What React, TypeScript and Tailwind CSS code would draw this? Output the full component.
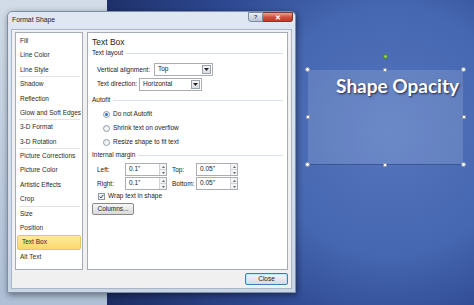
import React from "react";

const ui = "font-['Liberation_Sans',Arial,sans-serif] text-[#1b1b1b]";

const listItems: { label: string; sep?: boolean; active?: boolean }[] = [
  { label: "Fill" },
  { label: "Line Color" },
  { label: "Line Style", sep: true },
  { label: "Shadow" },
  { label: "Reflection" },
  { label: "Glow and Soft Edges", sep: true },
  { label: "3-D Format" },
  { label: "3-D Rotation", sep: true },
  { label: "Picture Corrections" },
  { label: "Picture Color" },
  { label: "Artistic Effects" },
  { label: "Crop", sep: true },
  { label: "Size" },
  { label: "Position" },
  { label: "Text Box", active: true },
  { label: "Alt Text" },
];

function GroupHeader({ label }: { label: string }) {
  return (
    <div className="flex h-[10px] items-center gap-[3px] pr-[4px]">
      <span className="text-[6.5px] leading-none">{label}</span>
      <div className="h-px flex-1 bg-[#d9dfe6]" />
    </div>
  );
}

function Arrow() {
  return (
    <div className="flex h-[9px] w-[9px] items-center justify-center border border-[#9aa3ad] bg-gradient-to-b from-[#f7f7f7] to-[#d9dde2]">
      <svg width="5" height="3" viewBox="0 0 5 3">
        <path d="M0 0h5L2.5 3z" fill="#222" />
      </svg>
    </div>
  );
}

function Dropdown({ value, width }: { value: string; width: string }) {
  return (
    <div className={`flex h-[13px] items-center justify-between border border-[#abadb3] bg-white pl-[3px] pr-[1px] ${width}`}>
      <span className="text-[6.5px] leading-none">{value}</span>
      <Arrow />
    </div>
  );
}

function Spin({ value }: { value: string }) {
  return (
    <div className="flex h-[13px] w-[42px] items-center justify-between border border-[#abadb3] bg-white pl-[3px]">
      <span className="text-[6.5px] leading-none">{value}</span>
      <div className="flex h-full w-[7px] flex-col border-l border-[#d0d4d9] bg-[#f3f4f6]">
        <div className="flex flex-1 items-center justify-center border-b border-[#d0d4d9]">
          <svg width="3" height="2" viewBox="0 0 3 2"><path d="M0 2h3L1.5 0z" fill="#666" /></svg>
        </div>
        <div className="flex flex-1 items-center justify-center">
          <svg width="3" height="2" viewBox="0 0 3 2"><path d="M0 0h3L1.5 2z" fill="#666" /></svg>
        </div>
      </div>
    </div>
  );
}

function Radio({ label, checked }: { label: string; checked?: boolean }) {
  return (
    <div className="flex h-[14px] items-center gap-[3px] pl-[11px]">
      <div className="flex h-[7px] w-[7px] items-center justify-center rounded-full border border-[#8e9aa8] bg-gradient-to-br from-[#e6eaef] to-white">
        {checked && <div className="h-[3px] w-[3px] rounded-full bg-[#2f6fc4]" />}
      </div>
      <span className="text-[6.5px] leading-none">{label}</span>
    </div>
  );
}

function Handle({ className }: { className: string }) {
  return <div className={`absolute h-[5px] w-[5px] rounded-full border border-[#8a96a8] bg-white ${className}`} />;
}

function SqHandle({ className }: { className: string }) {
  return <div className={`absolute h-[4px] w-[4px] border border-[#8a96a8] bg-white ${className}`} />;
}

export default function App() {
  return (
    <div className="relative flex h-[305px] w-[474px] overflow-hidden">
      {/* left app area */}
      <div className="h-full w-[107px] bg-gradient-to-b from-[#d2dce8] to-[#aebfd6]" />
      {/* slide area */}
      <div className="h-full flex-1 bg-[radial-gradient(circle_330px_at_77%_43%,#5677bf_0%,#4566b0_38%,#2e4992_62%,#1b2c62_100%)]" />

      {/* shape on slide */}
      <div className="absolute left-[308px] top-[70px] h-[94px] w-[155px] bg-white/[0.13] shadow-[0_1px_0_rgba(20,40,90,0.35)]">
        <div className="flex h-[31px] items-center justify-end pr-[4px]">
          <span className="font-['Lato',sans-serif] text-[19px] font-bold leading-none text-white [text-shadow:1px_1px_2px_rgba(0,0,20,0.7)]">
            Shape Opacity
          </span>
        </div>
        <Handle className="-left-[3px] -top-[3px]" />
        <Handle className="-right-[3px] -top-[3px]" />
        <Handle className="-left-[3px] -bottom-[3px]" />
        <Handle className="-right-[3px] -bottom-[3px]" />
        <SqHandle className="left-[75px] -top-[2.5px]" />
        <SqHandle className="left-[75px] -bottom-[2.5px]" />
        <SqHandle className="-left-[2.5px] top-[45px]" />
        <SqHandle className="-right-[2.5px] top-[45px]" />
        <div className="absolute left-[75px] -top-[16px] h-[5px] w-[5px] rounded-full border border-[#4a7a2a] bg-[#8fd14f]" />
      </div>

      {/* dialog window */}
      <div className={`absolute left-[7px] top-[11px] flex h-[282px] w-[289px] flex-col rounded-t-[5px] border border-[#7d8fa6] bg-gradient-to-b from-[#dfe8f2] to-[#c9d6e5] shadow-[1px_2px_6px_rgba(0,0,0,0.45)] ${ui}`}>
        {/* title bar */}
        <div className="flex h-[17px] items-start justify-between">
          <span className="pl-[4px] pt-[5px] text-[6.8px] leading-none text-[#1e1e1e]">Format Shape</span>
          <div className="mr-[2px] flex">
            <div className="flex h-[10px] w-[15px] items-center justify-center rounded-bl-[3px] border border-[#7b8aa0] bg-gradient-to-b from-[#e9eef4] to-[#b9c6d5] text-[6px] font-bold leading-none text-[#39475a]">
              ?
            </div>
            <div className="flex h-[10px] w-[30px] items-center justify-center rounded-br-[3px] border border-l-0 border-[#7a3a32] bg-gradient-to-b from-[#e9a294] via-[#d2513d] to-[#c23a25] text-[7px] font-bold leading-none text-white">
              ✕
            </div>
          </div>
        </div>
        {/* client area */}
        <div className="mx-[3px] mb-[3px] flex flex-1 flex-col border border-[#a8b6c8] bg-[#f0f0f0]">
          <div className="flex gap-[4px] pl-[3px] pr-[3px] pt-[2px]">
            {/* list */}
            <div className="flex h-[238px] w-[68px] flex-col border border-[#a5acb5] bg-white pt-[1px]">
              {listItems.map((it) => (
                <div key={it.label} className="relative h-[14.4px]">
                  <div
                    className={`flex h-full items-center px-[4px] ${
                      it.active
                        ? "mx-[1px] rounded-[2px] border border-[#e8c660] bg-gradient-to-b from-[#fdeaa0] to-[#fbd969] px-[3px]"
                        : ""
                    }`}
                  >
                    <span className="whitespace-nowrap text-[6.5px] leading-none text-[#2a2a2a]">{it.label}</span>
                  </div>
                  {it.sep && <div className="absolute bottom-0 left-[3px] right-[2px] h-px bg-[#e2e2e2]" />}
                </div>
              ))}
            </div>
            {/* right panel */}
            <div className="flex h-[238px] flex-1 flex-col border border-[#a5acb5] bg-white pl-[4px]">
              <div className="mt-[3px] flex h-[12px] items-center text-[8.5px] leading-none">Text Box</div>
              <GroupHeader label="Text layout" />
              <div className="mt-[5px] flex h-[14px] items-start pl-[5px]">
                <span className="w-[57px] pt-[3.5px] text-[6.5px] leading-none">Vertical alignment:</span>
                <Dropdown value="Top" width="w-[59px]" />
              </div>
              <div className="flex h-[14px] items-end pl-[5px]">
                <span className="w-[42px] pb-[3.5px] text-[6.5px] leading-none">Text direction:</span>
                <Dropdown value="Horizontal" width="w-[63px]" />
              </div>
              <div className="mt-[4px]">
                <GroupHeader label="Autofit" />
              </div>
              <div className="mt-[2px] flex flex-col">
                <Radio label="Do not Autofit" checked />
                <Radio label="Shrink text on overflow" />
                <Radio label="Resize shape to fit text" />
              </div>
              <div className="mt-[1px]">
                <GroupHeader label="Internal margin" />
              </div>
              <div className="mt-[3px] flex h-[14px] items-start pl-[5px]">
                <span className="w-[28px] pt-[3.5px] text-[6.5px] leading-none">Left:</span>
                <Spin value={'0.1"'} />
                <span className="ml-[5px] w-[24px] pt-[3.5px] text-[6.5px] leading-none">Top:</span>
                <Spin value={'0.05"'} />
              </div>
              <div className="flex h-[14px] items-start pl-[5px]">
                <span className="w-[28px] pt-[3.5px] text-[6.5px] leading-none">Right:</span>
                <Spin value={'0.1"'} />
                <span className="ml-[5px] w-[24px] pt-[3.5px] text-[6.5px] leading-none">Bottom:</span>
                <Spin value={'0.05"'} />
              </div>
              <div className="flex h-[11px] items-center gap-[3px] pl-[6px]">
                <div className="flex h-[7px] w-[7px] items-center justify-center border border-[#8e9aa8] bg-gradient-to-br from-[#e6eaef] to-white">
                  <svg width="5" height="5" viewBox="0 0 5 5">
                    <path d="M0.6 2.6l1.3 1.4L4.4 0.8" stroke="#2b3f66" strokeWidth="1" fill="none" />
                  </svg>
                </div>
                <span className="text-[6.5px] leading-none">Wrap text in shape</span>
              </div>
              <div className="mt-[1px] flex h-[12px] w-[42px] items-center justify-center rounded-[2px] border border-[#8a8a8a] bg-gradient-to-b from-[#f6f6f6] to-[#dadada] text-[6.5px] leading-none">
                Columns...
              </div>
            </div>
          </div>
          <div className="flex flex-1 items-start justify-end pr-[3px] pt-[3px]">
            <div className="flex h-[12px] w-[43px] items-center justify-center rounded-[2px] border border-[#3c7fb1] bg-gradient-to-b from-[#f4f6f8] to-[#d6dce3] text-[6.5px] leading-none shadow-[inset_0_0_0_1px_#bde6fd]">
              Close
            </div>
          </div>
        </div>
      </div>
    </div>
  );
}
